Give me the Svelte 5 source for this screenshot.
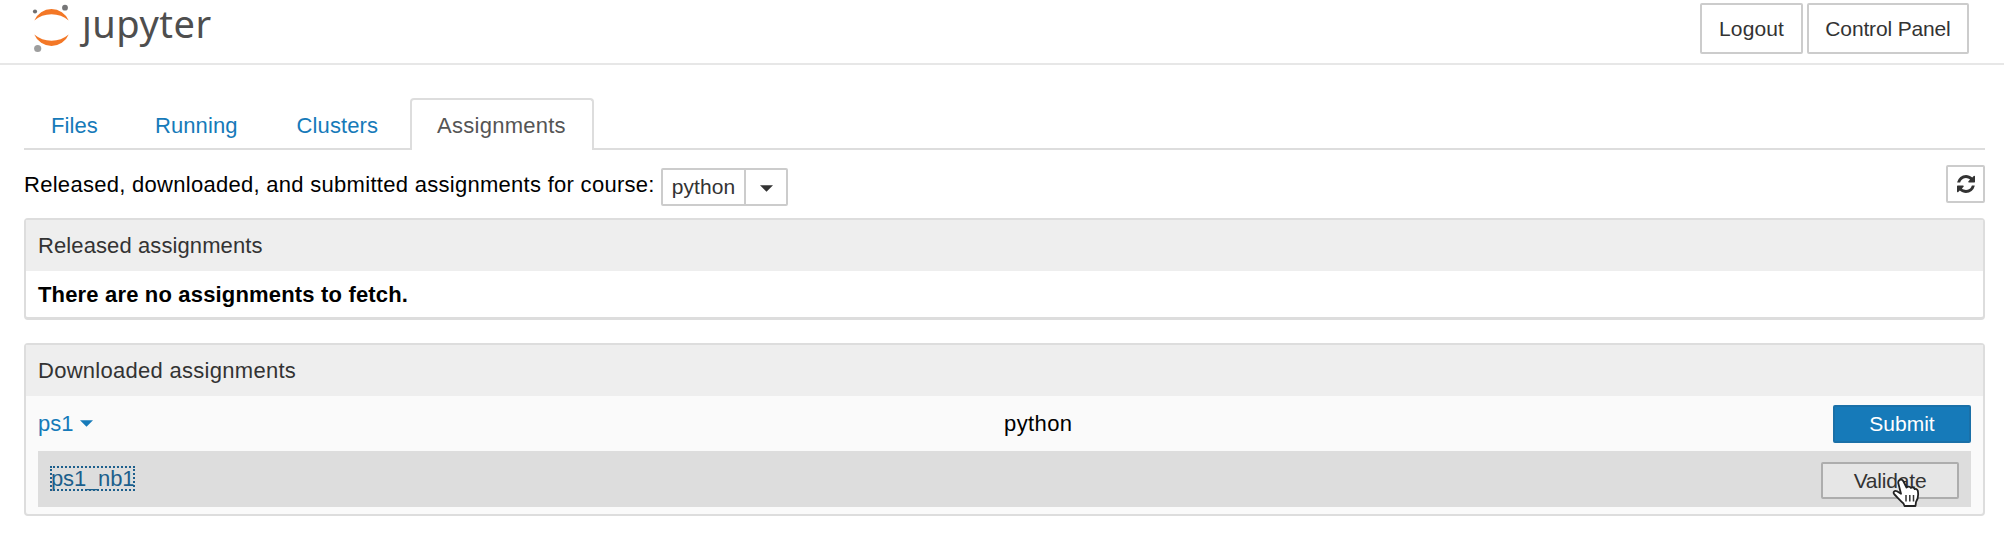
<script>
  const tabs = ['Files', 'Running', 'Clusters', 'Assignments'];
  const active = 'Assignments';
</script>

<div class="page">
  <header>
    <div class="logo">
      <svg width="38" height="50" viewBox="0 0 38 50">
        <path d="M2.300 20.500A18.600 18.600 0 0 1 36.700 20.500A27 27 0 0 0 2.300 20.500Z" fill="#f37726" />
        <path d="M2.300 34.500A18.600 18.600 0 0 0 36.700 34.500A27 27 0 0 1 2.300 34.500Z" fill="#f37726" />
        <circle cx="3" cy="11.500" r="2.100" fill="#6f6f70" />
        <circle cx="33" cy="7.700" r="2.900" fill="#767677" />
        <circle cx="5.700" cy="48.500" r="3.600" fill="#9e9e9e" />
      </svg>
      <span class="word">ȷupyter</span>
    </div>
    <div class="actions">
      <button class="btn logout">Logout</button>
      <button class="btn panel-btn">Control Panel</button>
    </div>
  </header>

  <main>
    <nav>
      {#each tabs as tab}
        <a class="tab" class:active={tab === active}>{tab}</a>
      {/each}
    </nav>

    <div class="toolbar">
      <span class="label">Released, downloaded, and submitted assignments for course:</span>
      <div class="select">
        <span class="value">python</span>
        <span class="arrow"><svg width="13" height="7" viewBox="0 0 14 7"><path d="M0 0H14L7 7Z" fill="#333" /></svg></span>
      </div>
      <button class="btn refresh" aria-label="Refresh">
        <svg width="18" height="18" viewBox="0 0 1536 1536">
          <path fill="#333" d="M1511 928q0 5-1 7-64 268-268 434.500T764 1536q-146 0-282.500-55T238 1324l-129 129q-19 19-45 19t-45-19-19-45V960q0-26 19-45t45-19h448q26 0 45 19t19 45-19 45l-137 137q71 66 161 102t187 36q134 0 250-65t186-179q11-17 53-117 8-23 30-23h192q13 0 22.500 9.500t9.500 22.500zm25-800v448q0 26-19 45t-45 19h-448q-26 0-45-19t-19-45 19-45l138-138Q969 256 768 256q-134 0-250 65T332 500q-11 17-53 117-8 23-30 23H50q-13 0-22.500-9.500T18 608v-7q65-268 270-434.500T768 0q146 0 284 55.500T1297 212l130-129q19-19 45-19t45 19 19 45z" />
        </svg>
      </button>
    </div>

    <section class="card released">
      <h2>Released assignments</h2>
      <p>There are no assignments to fetch.</p>
    </section>

    <section class="card downloaded">
      <h2>Downloaded assignments</h2>
      <div class="row">
        <a class="name">ps1 <svg width="13" height="7" viewBox="0 0 14 7"><path d="M0 0H14L7 7Z" fill="#167ab9" /></svg></a>
        <span class="course">python</span>
        <button class="btn action submit">Submit</button>
      </div>
      <div class="notebook">
        <a class="nb">ps1_nb1</a>
        <button class="btn action validate">Validate
          <svg class="cursor" width="28" height="30" viewBox="0 0 28 30">
            <path d="M7 2.500C8.500 1 10.500 1.500 11.500 3.500L14.500 9.500C16 8.300 18 8.500 18.800 9.900C20.300 9 22 9.500 22.700 11C24.700 10.700 26 12 26 14C26.500 18 26 21 24 24L23.500 28H12.500L11.500 25.500C8.500 23 5.500 19.500 2.500 16.500C0.500 14.200 2.500 12 5 13.200L9 15.700L6.500 6C6 4.500 6 3.500 7 2.500Z" fill="#fff" stroke="#222" stroke-width="1.800" stroke-linejoin="round" />
            <path d="M14 17V23.500M17.800 17V23.500M21.500 17V23.500" stroke="#333" stroke-width="1.500" />
          </svg>
        </button>
      </div>
    </section>
  </main>
</div>

<style>
  :global(body) { background: #fff; }
  .page, .page * { box-sizing: border-box; }
  .page {
    height: 534px;
    overflow: hidden;
    background: #fff;
    color: #000;
    font: 22px/32px "Liberation Sans", Arial, sans-serif;
  }
  header {
    display: flex;
    justify-content: space-between;
    align-items: flex-start;
    height: 65px;
    padding: 0 35px 0 32px;
    border-bottom: 2px solid #e7e7e7;
  }
  .logo { display: flex; }
  .logo svg { overflow: visible; }
  .word {
    margin-left: 12px;
    font: 38px/46px "Noto Sans", "Open Sans", sans-serif;
    letter-spacing: 0.5px;
    color: #4e4e4e;
  }
  .actions { display: flex; gap: 4px; padding-top: 3px; }
  .btn {
    display: block;
    padding: 0;
    border: 2px solid #ccc;
    border-radius: 2px;
    background: #fff;
    color: #333;
    font: inherit;
    font-size: 21px;
    text-align: center;
  }
  .logout { width: 103px; height: 51px; padding-top: 1px; letter-spacing: 0.1px; }
  .panel-btn { width: 162px; height: 51px; padding-top: 1px; letter-spacing: -0.15px; }
  main { padding: 33px 19px 0 24px; }
  nav { display: flex; height: 52px; border-bottom: 2px solid #ddd; }
  .tab {
    height: 52px;
    padding: 10px 25px 0;
    border: 2px solid transparent;
    border-bottom: 0;
    margin-right: 3px;
    color: #167ab9;
    letter-spacing: 0.1px;
  }
  .tab:nth-child(3) { margin-left: 2px; margin-right: 2px; }
  .tab.active {
    width: 184px;
    margin: 0 0 0 3px;
    background: #fff;
    border-color: #ddd;
    border-radius: 4px 4px 0 0;
    color: #555;
    letter-spacing: 0.25px;
  }
  .toolbar { display: flex; height: 68px; padding-top: 15px; }
  .label { width: 637px; padding-top: 4px; white-space: nowrap; letter-spacing: 0.285px; }
  .select {
    display: flex;
    width: 127px;
    height: 38px;
    margin-top: 3px;
    border: 2px solid #ccc;
    border-radius: 2px;
    color: #333;
    font-size: 21px;
    line-height: 34px;
  }
  .value { width: 81px; text-align: center; letter-spacing: 0.1px; }
  .arrow {
    display: flex;
    flex: 1;
    align-items: center;
    justify-content: center;
    padding-top: 2px;
    border-left: 2px solid #ccc;
  }
  .refresh {
    display: flex;
    align-items: center;
    justify-content: center;
    width: 39px;
    height: 38px;
    margin-left: auto;
  }
  .card { border: 2px solid #ddd; border-radius: 4px; }
  .released { height: 102px; border-bottom-width: 3px; margin-bottom: 23px; }
  .downloaded { height: 173px; background: #fafafa; }
  h2, p { margin: 0; padding-left: 12px; font-size: 22px; }
  h2 {
    height: 51px;
    padding-top: 10px;
    background: #eee;
    color: #333;
    font-weight: 400;
    letter-spacing: 0.1px;
  }
  .downloaded h2 { letter-spacing: 0.28px; }
  p { padding-top: 8px; font-weight: 700; letter-spacing: 0.17px; }
  .row { display: flex; height: 55px; padding: 9px 12px 0; }
  .name { display: flex; align-items: center; gap: 7px; width: 966px; height: 37px; color: #167ab9; }
  .course { line-height: 37px; letter-spacing: 0.4px; }
  .action { width: 138px; height: 38px; margin-left: auto; line-height: 34px; }
  .submit { background: #167ab9; border-color: #1a70a8; color: #fff; }
  .notebook {
    display: flex;
    align-items: flex-start;
    height: 56px;
    margin: 0 12px;
    padding: 11px 12px 0 13px;
    background: #ddd;
  }
  .nb {
    height: 23px;
    margin-top: 5px;
    line-height: 24px;
    letter-spacing: -0.15px;
    color: #1c5f8c;
    outline: 2px dotted #1c5f8c;
    outline-offset: -1px;
  }
  .validate { position: relative; height: 37px; line-height: 33px; letter-spacing: -0.2px; background: #e6e6e6; border-color: #adadad; }
  .cursor { position: absolute; left: 69px; top: 14px; }
</style>
